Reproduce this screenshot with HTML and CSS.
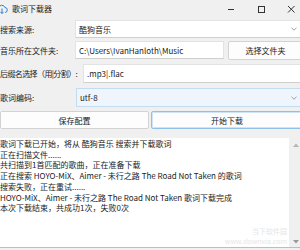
FILE: index.html
```html
<!DOCTYPE html>
<html>
	<head>
		<meta charset="UTF-8">
		<title>歌词下载器</title>
		<link rel="stylesheet" href="styles.css">
	</head>
	<body>
		<div class="window">
			<!-- 标题栏 -->
			<div class="titlebar">
				<svg class="app-icon" width="12" height="10" viewBox="0 0 12 10">
					<path d="M3 8.5H2.5A2.2 2.2 0 0 1 2.6 4.1 3.2 3.2 0 0 1 8.8 3.4 2.6 2.6 0 0 1 9.4 8.5H9" fill="none" stroke="#2f7fd0" stroke-width="1"/>
					<path d="M6 4.5V9.5M4.4 7.9 6 9.5 7.6 7.9" fill="none" stroke="#2f7fd0" stroke-width="1"/>
				</svg>
				<span class="title">歌词下载器</span>
				<div class="controls">
					<span class="ctl">
						<svg width="8" height="8" viewBox="0 0 8 8"><path d="M1 4.5H7" stroke="#333" stroke-width="1"/></svg>
					</span>
					<span class="ctl">
						<svg width="8" height="8" viewBox="0 0 8 8"><rect x="1.5" y="1.5" width="6" height="6" fill="none" stroke="#333" stroke-width="1"/></svg>
					</span>
					<span class="ctl">
						<svg width="8" height="8" viewBox="0 0 8 8"><path d="M1 1 7.5 7.5M7.5 1 1 7.5" stroke="#333" stroke-width="1"/></svg>
					</span>
				</div>
			</div>

			<!-- 设置项 -->
			<div class="form">
				<div class="row row-source">
					<span class="label label-source">搜索来源:</span>
					<div class="combo">
						<span>酷狗音乐</span>
						<svg class="chevron" width="6" height="4" viewBox="0 0 6 4"><path d="M0.5 0.8 3 3.2 5.5 0.8" fill="none" stroke="#888" stroke-width="0.8"/></svg>
					</div>
				</div>
				<div class="row row-folder">
					<span class="label label-folder">音乐所在文件夹:</span>
					<div class="input">C:\Users\IvanHanloth\Music</div>
					<button class="btn btn-pick">选择文件夹</button>
				</div>
				<div class="row row-ext">
					<span class="label label-ext">后缀名选择（用|分割）:</span>
					<div class="input input-ext">.mp3|.flac</div>
				</div>
				<div class="row row-enc">
					<span class="label label-enc">歌词编码:</span>
					<div class="combo combo-hover">
						<span>utf-8</span>
						<svg class="chevron" width="6" height="4" viewBox="0 0 6 4"><path d="M0.5 0.8 3 3.2 5.5 0.8" fill="none" stroke="#888" stroke-width="0.8"/></svg>
					</div>
				</div>
				<div class="actions">
					<button class="btn btn-save">保存配置</button>
					<button class="btn btn-start">开始下载</button>
				</div>
			</div>

			<!-- 日志 -->
			<div class="log">
				<div class="log-text">
					<p>歌词下载已开始，将从 酷狗音乐 搜索并下载歌词</p>
					<p>正在扫描文件......</p>
					<p>共扫描到1首匹配的歌曲，正在准备下载</p>
					<p>正在搜索 HOYO-MiX、Aimer - 未行之路 The Road Not Taken 的歌词</p>
					<p>搜索失败，正在重试......</p>
					<p>HOYO-MiX、Aimer - 未行之路 The Road Not Taken 歌词下载完成</p>
					<p>本次下载结束，共成功1次，失败0次</p>
				</div>
				<div class="scrollbar">
					<svg width="6" height="4" viewBox="0 0 6 4"><path d="M0 4 3 0.5 6 4Z" fill="#b5b5b5"/></svg>
					<svg width="6" height="4" viewBox="0 0 6 4"><path d="M0 0 3 3.5 6 0Z" fill="#9a9a9a"/></svg>
				</div>
				<div class="watermark">当下软件园<br>www.downxia.com</div>
			</div>
		</div>
	</body>
</html>
```

FILE: styles.css
```css
*{
	margin: 0;
	padding: 0;
	box-sizing: border-box;
}
html,body{
	width: 300px;
	height: 250px;
	overflow: hidden;
	background-color: #f0f0f0;
}
body{
	font-family: "Noto Sans CJK SC", "Noto Sans", sans-serif;
	font-size: 8px;
	color: #1a1a1a;
}
.window{
	width: 306px;
	height: 250px;
	display: flex;
	flex-direction: column;
}

/* 标题栏 */
.titlebar{
	height: 18px;
	display: flex;
	align-items: center;
	background-color: #f0f0f0;
}
.app-icon{
	margin-left: -4px;
	flex-shrink: 0;
}
.title{
	margin-left: 4px;
	line-height: 18px;
}
.controls{
	margin-left: auto;
	display: flex;
	height: 18px;
}
.ctl{
	width: 30px;
	display: flex;
	align-items: center;
	justify-content: center;
}

/* 设置项 */
.form{
	padding-right: 3px;
	display: flex;
	flex-direction: column;
}
.row{
	display: flex;
	align-items: center;
}
.row-source{
	margin-top: 2px;
	height: 18px;
}
.row-folder{
	margin-top: 3px;
	height: 18px;
}
.row-ext{
	margin-top: 5px;
	height: 19px;
}
.row-enc{
	margin-top: 5px;
	height: 19px;
}
.label{
	flex-shrink: 0;
	white-space: nowrap;
}
.label-source,.label-folder{
	width: 75px;
}
.label-ext{
	width: 83px;
	letter-spacing: -0.6px;
}
.label-enc{
	width: 76px;
}
.combo,.input{
	flex: 1;
	height: 100%;
	background-color: #fff;
	border: 1px solid #e3e3e3;
	border-bottom-color: #cfcfcf;
	display: flex;
	align-items: center;
	padding-left: 3px;
	white-space: nowrap;
	overflow: hidden;
}
.combo span{
	flex: 1;
}
.chevron{
	margin-right: 5px;
}
.combo-hover{
	background-color: #eef5fc;
	border-color: #c4dcf0;
}
.btn{
	font-family: inherit;
	font-size: 8px;
	color: #1a1a1a;
	background-color: #fdfdfd;
	border: 1px solid #d3d3d3;
	border-radius: 2px;
}
.btn-pick{
	width: 75px;
	height: 19px;
	margin-left: 4px;
}
.actions{
	margin-top: 4px;
	height: 18px;
	display: flex;
	gap: 2px;
}
.btn-save{
	width: 149px;
}
.btn-start{
	flex: 1;
	border: 1px solid #8ec1e9;
	box-shadow: inset 0 0 0 1px #cfe5f7;
}

/* 日志 */
.log{
	margin-top: 9px;
	height: 110px;
	display: flex;
	border-bottom: 1px solid #bdbdbd;
	position: relative;
	margin-right: 3px;
}
.log-text{
	flex: 1;
	background-color: #fff;
	padding-top: 1px;
	line-height: 10.7px;
	white-space: nowrap;
	overflow: hidden;
}
.scrollbar{
	width: 14px;
	background-color: #f0f0f0;
	display: flex;
	flex-direction: column;
	align-items: center;
	justify-content: space-between;
	padding: 5px 0 3px;
}
.watermark{
	position: absolute;
	right: 16px;
	bottom: 1px;
	font-size: 7px;
	line-height: 10px;
	color: #e6e6e6;
	text-align: right;
}
```
